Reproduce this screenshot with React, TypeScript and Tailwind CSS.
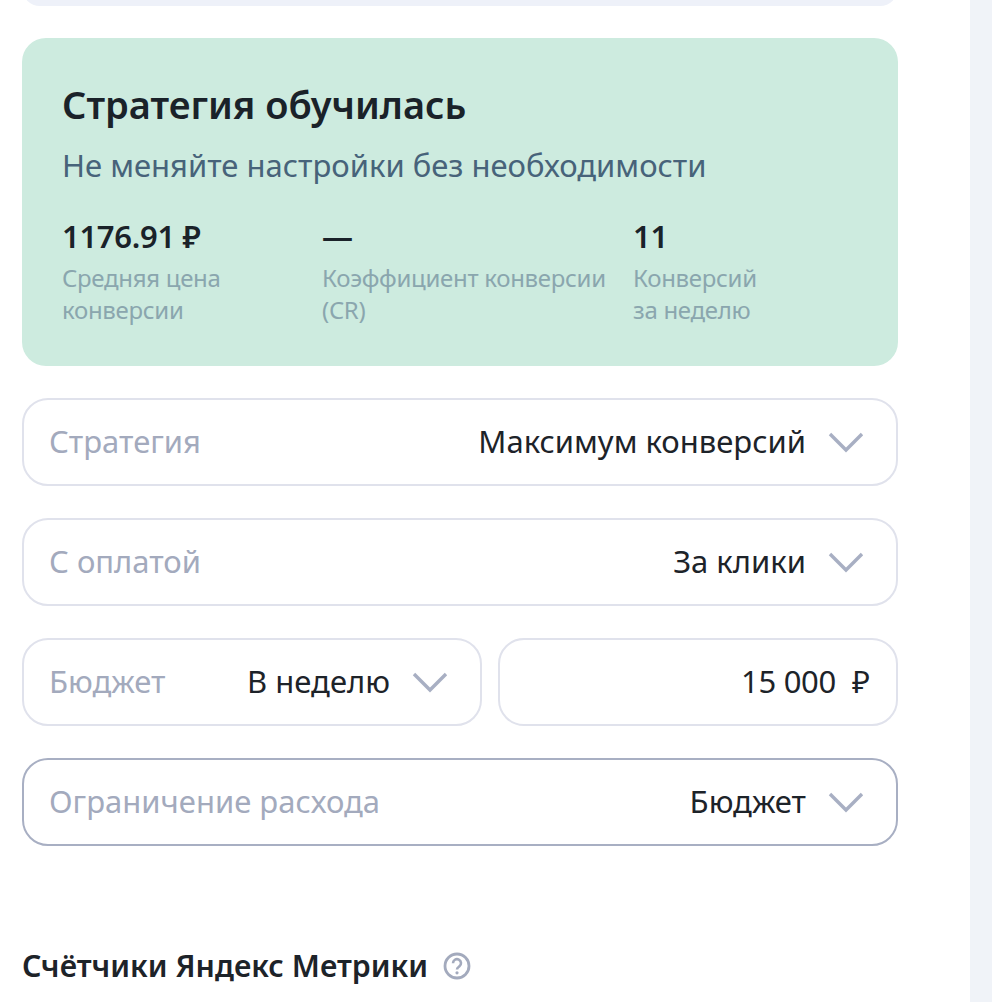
const font = "font-['Noto_Sans','Inter',sans-serif]";

function Chevron() {
  return (
    <svg width="36" height="22" viewBox="0 0 36 22" fill="none" className="shrink-0">
      <path d="M2 3L18 19L34 3" stroke="#a8afc3" strokeWidth="3.4" />
    </svg>
  );
}

function Field({ label, value, strong = false, className = "" }: { label: string; value: string; strong?: boolean; className?: string }) {
  return (
    <div className={`flex h-[88px] items-center justify-between rounded-[26px] border-2 bg-white pl-[25px] pr-[32px] ${strong ? "border-[#a8afc3]" : "border-[#e0e2ec]"} ${className}`}>
      <span className="pb-[2px] text-[31px] leading-[40px] text-[#a3aabd]">{label}</span>
      <span className="flex items-center gap-[22px]">
        <span className="pb-[2px] text-[31px] leading-[40px] text-[#1d2329]">{value}</span>
        <Chevron />
      </span>
    </div>
  );
}

function Stat({ value, lines, className }: { value: string; lines: string[]; className: string }) {
  return (
    <div className={className}>
      <div className="text-[31px] font-semibold leading-[40px] tracking-[-0.3px] text-[#1a2229]">{value}</div>
      <div className="mt-[6px] text-[24px] leading-[32px] tracking-[-0.3px] text-[#8aa6ae]">
        {lines.map((l) => (
          <div key={l} className="whitespace-nowrap">{l}</div>
        ))}
      </div>
    </div>
  );
}

export default function App() {
  return (
    <div className={`flex h-[1002px] w-[992px] overflow-hidden bg-white ${font}`}>
      <main className="w-[970px] shrink-0 px-[22px]">
        <div className="-mt-[30px] h-[36px] w-[876px] rounded-[24px] bg-[#eef1f9]" />
        <section className="mt-[32px] h-[328px] w-[876px] rounded-[24px] bg-[#cdebdf] px-[40px] pt-[42px]">
          <h2 className="text-[38px] font-semibold leading-[48px] text-[#1a2229]">Стратегия обучилась</h2>
          <p className="mt-[17px] text-[31px] leading-[40px] text-[#47637a]">Не меняйте настройки без необходимости</p>
          <div className="mt-[31px] flex">
            <Stat className="w-[260px]" value="1176.91 ₽" lines={["Средняя цена", "конверсии"]} />
            <Stat className="w-[311px]" value="—" lines={["Коэффициент конверсии", "(CR)"]} />
            <Stat className="" value="11" lines={["Конверсий", "за неделю"]} />
          </div>
        </section>
        <div className="mt-[32px] flex w-[876px] flex-col gap-[32px]">
          <Field label="Стратегия" value="Максимум конверсий" />
          <Field label="С оплатой" value="За клики" />
          <div className="flex gap-[16px]">
            <Field label="Бюджет" value="В неделю" className="w-[460px]" />
            <div className="flex h-[88px] w-[400px] items-center justify-end rounded-[26px] border-2 border-[#e0e2ec] bg-white pb-[2px] pr-[26px] text-[31px] leading-[40px] text-[#1d2329]">
              <span className="tracking-[-0.3px]">15 000</span>
              <span className="ml-[16px]">₽</span>
            </div>
          </div>
          <Field label="Ограничение расхода" value="Бюджет" strong />
        </div>
        <div className="mt-[100px] flex items-center gap-[15px]">
          <h3 className="text-[30.3px] font-semibold leading-[40px] text-[#1d2329]">Счётчики Яндекс Метрики</h3>
          <svg width="28" height="28" viewBox="0 0 28 28" fill="none">
            <circle cx="14" cy="14" r="12" stroke="#a3aabd" strokeWidth="2.8" />
            <path d="M10 11.2a4 4 0 1 1 6.3 3.2c-1.4 1-2.3 1.6-2.3 3" stroke="#a3aabd" strokeWidth="2.6" />
            <circle cx="14" cy="20.8" r="1.6" fill="#a3aabd" />
          </svg>
        </div>
      </main>
      <aside className="w-[22px] bg-[#f0f3f8]" />
    </div>
  );
}
